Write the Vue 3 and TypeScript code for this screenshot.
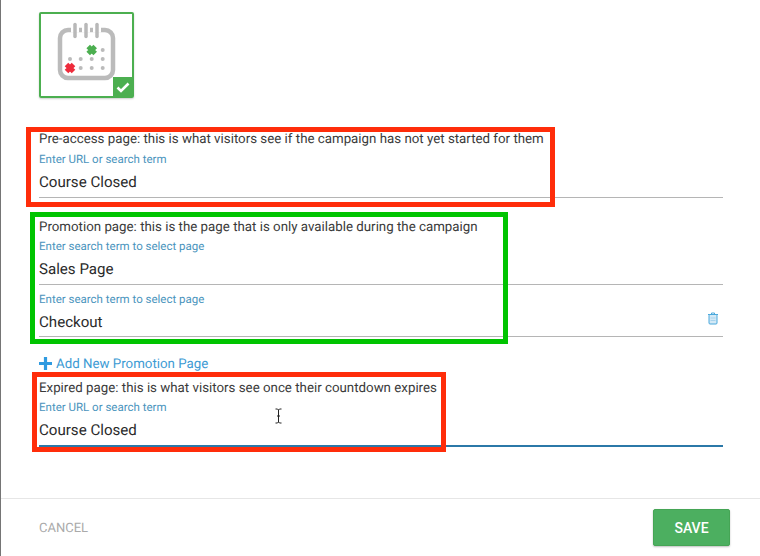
<template>
  <div class="page">
    <main class="content">
      <div class="tile">
        <svg class="calendar" width="91" height="81" viewBox="0 0 91 81" aria-hidden="true">
          <rect x="19" y="16" width="53" height="48" rx="8" fill="none" stroke="#bbb" stroke-width="4.500" />
          <g v-for="x in [34, 45, 56]" :key="x">
            <rect :x="x - 4" y="10" width="8" height="8.500" fill="#fff" />
            <path :d="`M${x} 10.500v12`" stroke="#b8b8b8" stroke-width="3.500" stroke-linecap="round" fill="none" />
          </g>
          <circle v-for="(d, i) in dots" :key="i" :cx="d[0]" :cy="d[1]" r="2" fill="#bbb" />
          <path d="M47.200 32.500l7 7M54.200 32.500l-7 7" stroke="#4caf50" stroke-width="5" />
          <path d="M25.500 50.500l7 7M32.500 50.500l-7 7" stroke="#ee2c3c" stroke-width="5" />
        </svg>
        <span class="badge">
          <svg width="14" height="11" viewBox="0 0 14 11" aria-hidden="true">
            <path d="M1.500 5.500l3.500 3.500 7.500-7.500" fill="none" stroke="#fff" stroke-width="2.600" />
          </svg>
        </span>
      </div>

      <section class="block pre">
        <p class="label">Pre-access page: this is what visitors see if the campaign has not yet started for them</p>
        <div class="field">
          <span class="hint">Enter URL or search term</span>
          <span class="value">Course Closed</span>
        </div>
      </section>

      <section class="block promo">
        <p class="label">Promotion page: this is the page that is only available during the campaign</p>
        <div class="field first">
          <span class="hint">Enter search term to select page</span>
          <span class="value">Sales Page</span>
        </div>
        <div class="field second">
          <span class="hint">Enter search term to select page</span>
          <span class="value">Checkout</span>
          <svg class="trash" width="12" height="13" viewBox="0 0 12 13" aria-hidden="true">
            <path d="M1 2.500h10M4.500 2.500v-1.500h3v1.500" fill="none" stroke="#4aa8dc" stroke-width="1" />
            <rect x="2" y="2.500" width="8" height="9.500" rx="1" fill="#d3e9f6" stroke="#4aa8dc" stroke-width="1" />
            <path d="M3.500 6h5M3.500 8.500h5" stroke="#a9d3ec" stroke-width="1" />
          </svg>
        </div>
      </section>

      <a class="add">
        <svg width="13" height="13" viewBox="0 0 13 13" aria-hidden="true">
          <path d="M6.500 0v13M0 6.500h13" stroke="#2f9ae0" stroke-width="3.200" />
        </svg>
        Add New Promotion Page
      </a>

      <section class="block expired">
        <p class="label">Expired page: this is what visitors see once their countdown expires</p>
        <div class="field active">
          <span class="hint">Enter URL or search term</span>
          <span class="value">Course Closed</span>
        </div>
      </section>
    </main>

    <footer class="footer">
      <span class="cancel">CANCEL</span>
      <button class="save" type="button">SAVE</button>
    </footer>

    <!-- annotation frames drawn over the form -->
    <div class="frame red" style="left: 26px; top: 127px; width: 529px; height: 80px"></div>
    <div class="frame green" style="left: 30px; top: 212px; width: 478px; height: 132px"></div>
    <div class="frame red" style="left: 32px; top: 372px; width: 414px; height: 80px"></div>

    <svg class="cursor" width="9" height="16" viewBox="0 0 9 16" aria-hidden="true">
      <path d="M1.500 1h2l1 1 1-1h2M4.500 2v12M1.500 15h2l1-1 1 1h2M3 8h3" fill="none" stroke="#222" stroke-width="1" />
    </svg>
  </div>
</template>

<script setup lang="ts">
// grey day markers on the calendar tile
const dots: [number, number][] = [
  [61.700, 36],
  [29, 45],
  [39.700, 45],
  [50.700, 45],
  [61.700, 45],
  [39.700, 54],
  [50.700, 54],
  [61.700, 54]
]
</script>

<style>
html,
body {
  margin: 0;
  background: #fff;
}
</style>

<style scoped>
.page {
  position: relative;
  box-sizing: border-box;
  width: 760px;
  height: 556px;
  overflow: hidden;
  display: flex;
  flex-direction: column;
  border-left: 1px solid #757575;
  background: #fff;
  font-family: Roboto, "Liberation Sans", sans-serif;
  text-rendering: geometricPrecision;
}

.content {
  flex: 1;
  display: flex;
  flex-direction: column;
  padding: 12px 37px 0 38px;
}

.tile {
  position: relative;
  box-sizing: border-box;
  width: 95px;
  height: 86px;
  border: 2px solid #4caf50;
  border-radius: 2px;
  box-shadow: 0 1px 2px rgba(0, 0, 0, 0.2);
}

.calendar {
  display: block;
}

.badge {
  position: absolute;
  right: -1px;
  bottom: -1px;
  width: 20px;
  height: 20px;
  display: flex;
  align-items: center;
  justify-content: center;
  background: #4caf50;
}

.block {
  display: flex;
  flex-direction: column;
}

.pre {
  margin-top: 34px;
}

.promo {
  margin-top: 22px;
}

.expired {
  margin-top: 8px;
}

.label {
  margin: 0;
  font-size: 13.300px;
  line-height: 16px;
  color: #3a3a3a;
}

.field {
  position: relative;
  display: flex;
  flex-direction: column;
  height: 45px;
  margin-top: 4px;
  border-bottom: 1px solid #b5b5b5;
}

.field.first {
  margin-top: 3px;
}

.field.second {
  height: 44px;
  margin-top: 7px;
}

.field.active {
  margin-top: 3px;
  border-bottom: 2px solid #2b78a8;
}

.hint {
  font-size: 11.500px;
  line-height: 14px;
  color: #4a94bd;
}

.value {
  margin-top: 6px;
  font-size: 15.100px;
  line-height: 20px;
  color: #2a2a2a;
}

.trash {
  position: absolute;
  right: 4px;
  top: 20px;
}

.add {
  display: flex;
  align-items: center;
  gap: 4px;
  margin-top: 20px;
  font-size: 13.300px;
  line-height: 16px;
  color: #3d9bd4;
}

.add svg {
  margin-bottom: 3px;
}

.footer {
  display: flex;
  align-items: center;
  justify-content: space-between;
  height: 58px;
  box-sizing: border-box;
  padding: 0 30px 0 38px;
  border-top: 1px solid #e6e6e6;
}

.cancel {
  padding-top: 2px;
  font-size: 13px;
  color: #aaa;
}

.save {
  width: 77px;
  height: 37px;
  padding: 0;
  border: 1px solid #45a555;
  border-radius: 2px;
  background: #4caf60;
  box-shadow: 0 1px 2px rgba(0, 0, 0, 0.25);
  font-family: inherit;
  font-size: 14px;
  font-weight: 500;
  color: #fff;
}

.frame {
  position: absolute;
  box-sizing: border-box;
  margin-left: -1px;
  border: 5px solid;
  pointer-events: none;
}

.red {
  border-color: #ff2d0a;
}

.green {
  border-color: #00c400;
}

.cursor {
  position: absolute;
  left: 273px;
  top: 408px;
}
</style>
